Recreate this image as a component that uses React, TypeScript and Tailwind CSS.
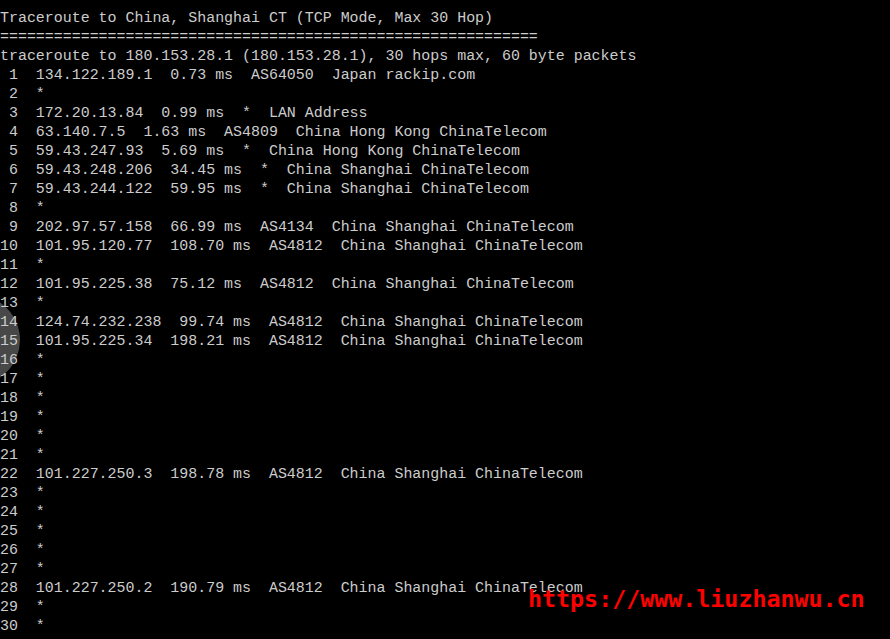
const hops: string[] = [
  " 1  134.122.189.1  0.73 ms  AS64050  Japan rackip.com",
  " 2  *",
  " 3  172.20.13.84  0.99 ms  *  LAN Address",
  " 4  63.140.7.5  1.63 ms  AS4809  China Hong Kong ChinaTelecom",
  " 5  59.43.247.93  5.69 ms  *  China Hong Kong ChinaTelecom",
  " 6  59.43.248.206  34.45 ms  *  China Shanghai ChinaTelecom",
  " 7  59.43.244.122  59.95 ms  *  China Shanghai ChinaTelecom",
  " 8  *",
  " 9  202.97.57.158  66.99 ms  AS4134  China Shanghai ChinaTelecom",
  "10  101.95.120.77  108.70 ms  AS4812  China Shanghai ChinaTelecom",
  "11  *",
  "12  101.95.225.38  75.12 ms  AS4812  China Shanghai ChinaTelecom",
  "13  *",
  "14  124.74.232.238  99.74 ms  AS4812  China Shanghai ChinaTelecom",
  "15  101.95.225.34  198.21 ms  AS4812  China Shanghai ChinaTelecom",
  "16  *",
  "17  *",
  "18  *",
  "19  *",
  "20  *",
  "21  *",
  "22  101.227.250.3  198.78 ms  AS4812  China Shanghai ChinaTelecom",
  "23  *",
  "24  *",
  "25  *",
  "26  *",
  "27  *",
  "28  101.227.250.2  190.79 ms  AS4812  China Shanghai ChinaTelecom",
  "29  *",
  "30  *",
];

const lines = [
  "Traceroute to China, Shanghai CT (TCP Mode, Max 30 Hop)",
  "=".repeat(60),
  "traceroute to 180.153.28.1 (180.153.28.1), 30 hops max, 60 byte packets",
  ...hops,
];

export default function App() {
  return (
    <div className="relative w-[890px] h-[639px] overflow-hidden bg-black">
      {/* scroll indicator bubble, sits under the text */}
      <div className="absolute left-[-70px] top-[295px] w-[90px] h-[90px] rounded-full bg-[#484848]" />
      <div className="relative pt-[9px] font-['Liberation_Mono',monospace] text-[14.95px] leading-[19px] text-[#cccccc] whitespace-pre">
        {lines.map((l, i) => (
          <div key={i}>{l}</div>
        ))}
      </div>
      {/* watermark */}
      <div className="absolute left-[528px] top-[585px] font-['DejaVu_Sans_Mono',monospace] font-bold text-[23.3px] leading-[28px] text-[#ff0000] whitespace-pre">
        https://www.liuzhanwu.cn
      </div>
    </div>
  );
}
